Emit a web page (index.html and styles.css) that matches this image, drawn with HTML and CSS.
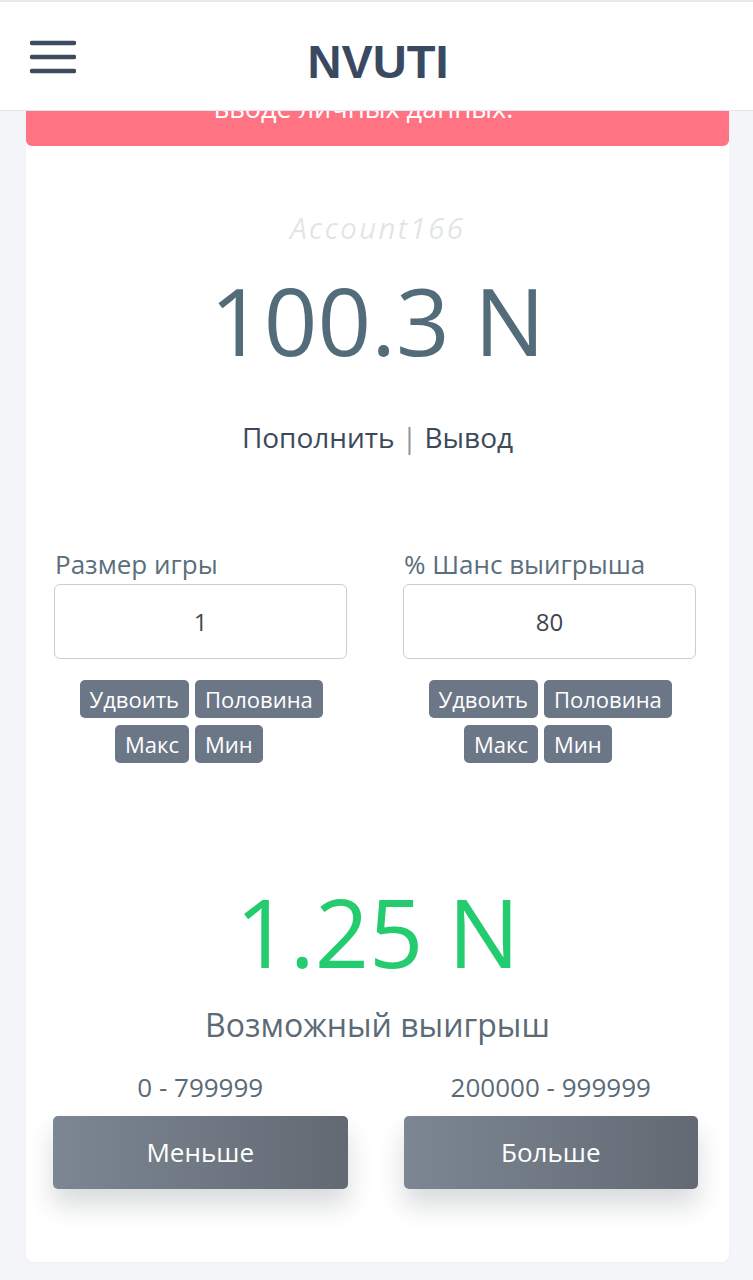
FILE: index.html
```html
<html>
<head>
	<meta charset="utf-8">
	<link rel="stylesheet" href="styles.css">
</head>

<body>

<div class="header">
	<div class="menu-btn">
		<svg width="46" height="36" viewBox="0 0 46 36">
			<path d="M2 4H44M2 18H44M2 32H44" stroke="#3d4b60" stroke-width="4.5" stroke-linecap="round"/>
		</svg>
	</div>
	<div class="logo">NVUTI</div>
</div>

<div class="page">
	<div class="card">
		<div class="alert">вводе личных данных.</div>

		<div class="user-name">Account166</div>
		<div class="balance">100.3 N</div>
		<div class="wallet-links">Пополнить <span class="sep">|</span> Вывод</div>

		<div class="bet-grid">
			<div class="bet-col">
				<label class="bet-label" for="size">Размер игры</label>
				<input class="bet-input" type="text" id="size" value="1">
				<div class="quick-btns">
					<span class="qbtn right">Удвоить</span>
					<span class="qbtn">Половина</span>
					<span class="qbtn right">Макс</span>
					<span class="qbtn">Мин</span>
				</div>
			</div>
			<div class="bet-col">
				<label class="bet-label" for="chance">% Шанс выигрыша</label>
				<input class="bet-input" type="text" id="chance" value="80">
				<div class="quick-btns">
					<span class="qbtn right">Удвоить</span>
					<span class="qbtn">Половина</span>
					<span class="qbtn right">Макс</span>
					<span class="qbtn">Мин</span>
				</div>
			</div>
		</div>

		<div class="win-amount">1.25 N</div>
		<div class="win-label">Возможный выигрыш</div>

		<div class="play-grid">
			<div class="play-col">
				<div class="range">0 - 799999</div>
				<div class="play-btn">Меньше</div>
			</div>
			<div class="play-col">
				<div class="range">200000 - 999999</div>
				<div class="play-btn">Больше</div>
			</div>
		</div>
	</div>
</div>

</body>
</html>
```

FILE: styles.css
```css
body{
	margin: 0;
	background: #f3f5f8;
	font-family: "Open Sans", "Noto Sans", sans-serif;
}
.header{
	position: fixed;
	top: 0;
	left: 0;
	right: 0;
	height: 108px;
	background: #fff;
	border-top: 2px solid #e6e8eb;
	border-bottom: 1px solid #e3e5e8;
	z-index: 10;
}
.menu-btn{
	position: absolute;
	left: 30px;
	top: 37px;
	line-height: 0;
}
.logo{
	text-align: center;
	font-family: "Liberation Sans", Arial, sans-serif;
	font-weight: 700;
	font-size: 47px;
	line-height: 56px;
	padding-top: 32px;
	color: #3a4962;
	padding-left: 3px;
}
.page{
	padding: 60px 24px 10px 26px;
}
.card{
	background: #fff;
	border-radius: 8px;
	padding-bottom: 73px;
	box-shadow: 0 1px 3px rgba(0,0,0,0.03);
}
.alert{
	background: #ff7383;
	color: #fff;
	font-size: 27px;
	line-height: 32px;
	text-align: center;
	padding: 32px 48px 22px 20px;
	border-radius: 6px;
}
.user-name{
	margin-top: 62px;
	font-size: 30px;
	line-height: 40px;
	text-align: center;
	font-style: italic;
	color: rgba(74,90,106,0.16);
	letter-spacing: 2px;
}
.balance{
	margin-top: 17px;
	font-size: 94px;
	line-height: 110px;
	text-align: center;
	color: #536c79;
}
.wallet-links{
	margin-top: 45px;
	font-size: 28px;
	line-height: 34px;
	text-align: center;
	color: #3d4859;
}
.wallet-links .sep{
	color: #8b949c;
}
.bet-grid, .play-grid{
	display: grid;
	grid-template-columns: 1fr 1fr;
	column-gap: 56px;
	padding: 0 33px 0 28px;
}
.bet-grid{
	margin-top: 95px;
}
.bet-label{
	display: block;
	font-size: 26px;
	line-height: 30px;
	color: #5a6e7b;
	margin-left: 1px;
}
.bet-input{
	display: block;
	width: 100%;
	height: 75px;
	margin-top: 5px;
	box-sizing: border-box;
	border: 1px solid #c9ced3;
	border-radius: 6px;
	text-align: center;
	font-family: "Open Sans", sans-serif;
	font-size: 24px;
	color: #3f4650;
	outline: none;
}
.quick-btns{
	display: grid;
	grid-template-columns: 135px 1fr;
	gap: 7px 6px;
	margin-top: 21px;
}
.qbtn{
	justify-self: start;
	background: #6b7786;
	color: #fff;
	font-size: 22px;
	line-height: 38px;
	height: 38px;
	padding: 0 10px;
	border-radius: 5px;
}
.qbtn.right{
	justify-self: end;
}
.win-amount{
	margin-top: 113px;
	font-size: 95px;
	line-height: 110px;
	text-align: center;
	color: #24cb6f;
}
.win-label{
	margin-top: 21px;
	font-size: 32px;
	line-height: 36px;
	text-align: center;
	color: #5b6a77;
}
.play-grid{
	margin-top: 28px;
	padding: 0 31px 0 27px;
}
.range{
	font-size: 26px;
	line-height: 32px;
	text-align: center;
	color: #5b6a77;
}
.play-btn{
	margin-top: 13px;
	height: 73px;
	line-height: 73px;
	text-align: center;
	color: #fff;
	font-size: 26px;
	border-radius: 5px;
	background: linear-gradient(to right, #7c8793, #626973);
	box-shadow: 0 16px 26px rgba(40,50,60,0.18);
}
```
